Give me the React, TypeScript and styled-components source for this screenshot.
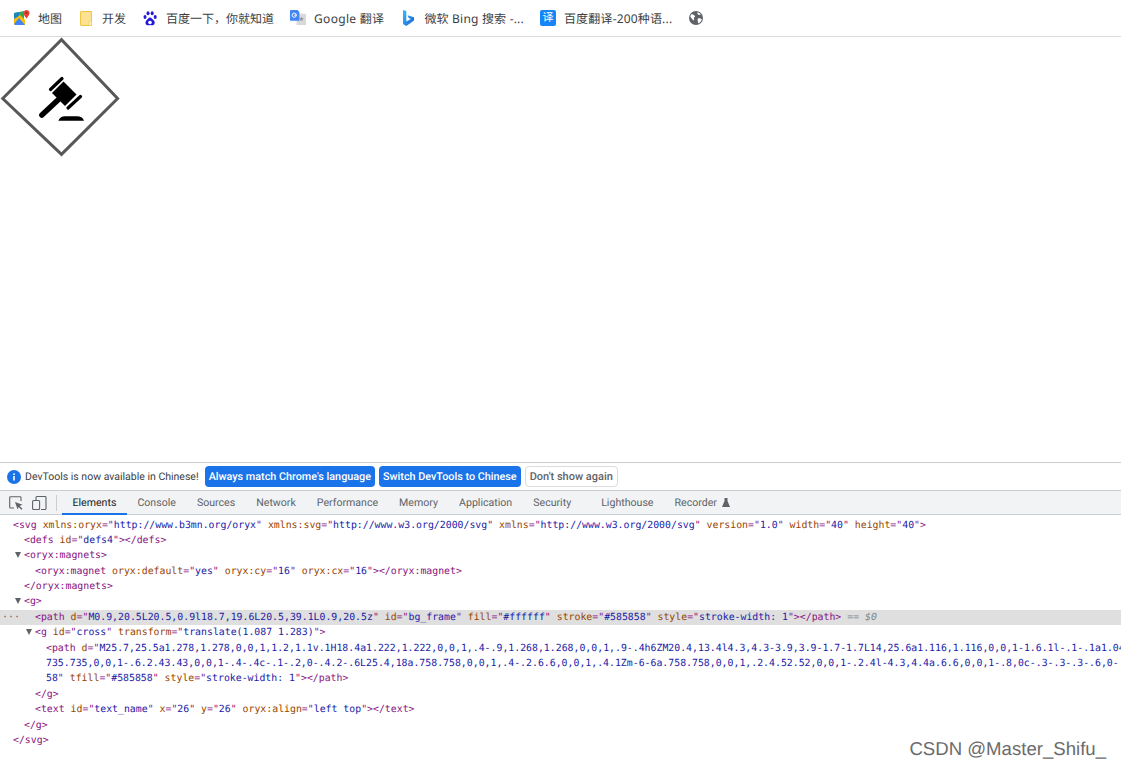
import React from "react";
import styled, { createGlobalStyle } from "styled-components";

const GlobalStyle = createGlobalStyle`
  html, body {
    margin: 0;
    padding: 0;
    background: #ffffff;
    overflow: hidden;
    text-rendering: geometricPrecision;
  }
`;

const BAR_FONT = `"Noto Sans", "Noto Sans CJK SC", "Liberation Sans", sans-serif`;
const DEVTOOLS_FONT = `Roboto, "Liberation Sans", sans-serif`;

function MapsIcon() {
  return (
    <svg width="16" height="16" viewBox="0 0 16 16">
      <path d="M0 3L10 1V15H1.5L0 14Z" fill="#34a853" />
      <path d="M0 9L6 5L11 10V15H1.5L0 14Z" fill="#fbbc04" />
      <path d="M0 14L5 8L11 15H1.5Z" fill="#4285f4" />
      <path d="M0 3L5 2V6L0 9Z" fill="#1a73e8" opacity="0.7" />
      <path d="M12.5 0C10.6 0 9.5 1.4 9.5 3C9.5 5.2 12.5 8.5 12.5 8.5S15.5 5.2 15.5 3C15.5 1.4 14.4 0 12.5 0Z" fill="#ea4335" />
      <circle cx="12.5" cy="3" r="1.1" fill="#9c2b22" />
    </svg>
  );
}

function FolderIcon() {
  return (
    <svg width="12" height="15" viewBox="0 0 12 15">
      <path d="M1 .5H11.5V14.5H1A.6.6 0 0 1 .5 14V1A.6.6 0 0 1 1 .5Z" fill="#fde293" stroke="#f0c53f" />
      <rect x="9" y="10" width="2.5" height="4.5" fill="#fff3c4" stroke="#f0c53f" strokeWidth="0.6" />
    </svg>
  );
}

function BaiduIcon() {
  return (
    <svg width="14" height="15" viewBox="0 0 14 15" fill="#2319dc">
      <ellipse cx="2" cy="6" rx="1.5" ry="2" />
      <ellipse cx="5" cy="2.3" rx="1.5" ry="2" />
      <ellipse cx="9.2" cy="2.3" rx="1.5" ry="2" />
      <ellipse cx="12.2" cy="6" rx="1.5" ry="2" />
      <path d="M7 6.5C5.5 6.5 5 8 3.6 9.2C2 10.5 2 13.8 4.6 14.3C5.8 14.5 6.2 14 7 14C7.8 14 8.4 14.5 9.6 14.3C12.2 13.8 12.2 10.5 10.6 9.2C9.2 8 8.5 6.5 7 6.5Z" />
      <circle cx="7" cy="11.5" r="1.8" fill="#ffffff" />
    </svg>
  );
}

function GoogleTranslateIcon() {
  return (
    <svg width="16" height="16" viewBox="0 0 17 17">
      <rect x="7" y="4" width="10" height="12" fill="#d9d9d9" />
      <path d="M12.1 7L12.8 8.8H14.7L13.2 10L13.7 11.9L12.1 10.7L10.6 11.9L11.1 10L9.6 8.8H11.5Z" fill="#8a93a6" />
      <path d="M1 0H8L10 2V11.5H1A1 1 0 0 1 0 10.5V1A1 1 0 0 1 1 0Z" fill="#4285f4" />
      <circle cx="4.5" cy="5.5" r="2.2" fill="none" stroke="#ffffff" strokeWidth="1" />
      <path d="M4.5 5.5H7" stroke="#ffffff" strokeWidth="1" />
    </svg>
  );
}

function BingIcon() {
  return (
    <svg width="11" height="16" viewBox="0 0 11 16">
      <defs>
        <linearGradient id="bingGrad" x1="0" y1="0" x2="1" y2="1">
          <stop offset="0" stopColor="#37bdff" />
          <stop offset="1" stopColor="#1a5fd6" />
        </linearGradient>
      </defs>
      <path d="M0 0L3.3 1.1V11.5L7.8 9L5.7 8L4.5 5.2L11 7.3V10.6L3.3 16L0 14Z" fill="url(#bingGrad)" />
    </svg>
  );
}

function GlobeIcon() {
  return (
    <svg width="14" height="14" viewBox="0 0 14 14">
      <circle cx="7" cy="7" r="7" fill="#5f6368" />
      <path d="M2 3.5C3.5 3 4.5 4 5.5 4.5C6.5 5 6 6.5 5 6.5C4.5 7.5 5.5 8.5 5 9.5C4 9.5 2 7 1.3 5.5Z" fill="#ffffff" />
      <path d="M8.5 1.2C9.5 1.5 11 2.3 11.8 3.5C11 4.2 9.8 4 9 3.5C8.5 3 8.3 2 8.5 1.2ZM9 7.5C10.5 7 12 7.8 12.8 8.5C12.3 10 11 11.8 9.5 12.5C9 11 8 9 9 7.5Z" fill="#ffffff" />
    </svg>
  );
}

function InfoIcon() {
  return (
    <svg width="14" height="14" viewBox="0 0 14 14">
      <circle cx="7" cy="7" r="7" fill="#1a73e8" />
      <rect x="6.2" y="6" width="1.6" height="4.5" fill="#ffffff" />
      <rect x="6.2" y="3.4" width="1.6" height="1.6" fill="#ffffff" />
    </svg>
  );
}

function InspectIcon() {
  return (
    <svg width="14" height="14" viewBox="0 0 14 14" fill="none">
      <path d="M5 12H1.5A.8.8 0 0 1 .7 11.2V1.5A.8.8 0 0 1 1.5 .7H11.2A.8.8 0 0 1 12 1.5V5" stroke="#5f6368" strokeWidth="1.1" />
      <path d="M6 6L13.5 8.8L10.6 10L13.5 12.8L12.5 13.8L9.6 11L8.6 13.5Z" fill="#5f6368" />
    </svg>
  );
}

function DeviceIcon() {
  return (
    <svg width="15" height="14" viewBox="0 0 15 14" fill="none" stroke="#5f6368" strokeWidth="1.1">
      <path d="M4 4V1.5A1 1 0 0 1 5 .5H13A1 1 0 0 1 14 1.5V12.5A1 1 0 0 1 13 13.5H9" />
      <rect x=".6" y="4.5" width="7" height="9" rx="1" />
    </svg>
  );
}

function FlaskIcon() {
  return (
    <svg width="8" height="9" viewBox="0 0 8 9">
      <path d="M2.5 0H5.5V3L8 9H0L2.5 3Z" fill="#5f6368" />
    </svg>
  );
}

function GavelStamp() {
  return (
    <svg width="120" height="120" viewBox="0 0 120 120">
      <path d="M2.7 61.5L61.5 2.7L117.6 61.5L61.5 117.3L2.7 61.5Z" fill="#ffffff" stroke="#585858" strokeWidth="3" />
      <path d="M63.5 44.5L76.5 57.5L65 69L52 56Z" fill="#000000" />
      <path d="M50.5 52.5L62 41.5M68 71L80.5 59.5" stroke="#000000" strokeWidth="3.2" strokeLinecap="round" />
      <path d="M58.5 62.5L41.9 78" stroke="#000000" strokeWidth="5.5" strokeLinecap="round" />
      <path d="M58.3 83.7C59.5 80.5 62 79.2 65 79.2H77C80.5 79.2 83 80.5 84 83.7Z" fill="#000000" />
    </svg>
  );
}

const tabs = [
  { label: "Elements", active: true },
  { label: "Console" },
  { label: "Sources" },
  { label: "Network" },
  { label: "Performance" },
  { label: "Memory" },
  { label: "Application" },
  { label: "Security" },
  { label: "Lighthouse", extra: 9 },
  { label: "Recorder", flask: true },
];

function Open({ name }: { name: string }) {
  return <Tag>&lt;{name}</Tag>;
}

function Pair({ name, value }: { name: string; value: string }) {
  return (
    <>
      {" "}
      <AttrName>{name}</AttrName>
      <Tag>=&quot;</Tag>
      <AttrValue>{value}</AttrValue>
      <Tag>&quot;</Tag>
    </>
  );
}

function App() {
  const bookmarks = [
    { icon: <MapsIcon />, label: "地图" },
    { icon: <FolderIcon />, label: "开发" },
    { icon: <BaiduIcon />, label: "百度一下，你就知道" },
    { icon: <GoogleTranslateIcon />, label: "Google 翻译", spread: 0.3 },
    { icon: <BingIcon />, label: "微软 Bing 搜索 -...", spread: 0.2 },
    { icon: <TranslateBadge>译</TranslateBadge>, label: "百度翻译-200种语...", spread: 0.17 },
  ];

  return (
    <>
      <GlobalStyle />
      <Window>
        <BookmarkBar>
          {bookmarks.map((b) => (
            <Bookmark key={b.label} $spread={b.spread}>
              <IconBox>{b.icon}</IconBox>
              <span>{b.label}</span>
            </Bookmark>
          ))}
          <IconBox>
            <GlobeIcon />
          </IconBox>
        </BookmarkBar>

        <Viewport>
          <GavelStamp />
        </Viewport>

        <Devtools>
          <InfoBar>
            <InfoIcon />
            <InfoText>DevTools is now available in Chinese!</InfoText>
            <PrimaryButton>Always match Chrome's language</PrimaryButton>
            <PrimaryButton>Switch DevTools to Chinese</PrimaryButton>
            <GhostButton>Don't show again</GhostButton>
          </InfoBar>

          <TabBar>
            <ToolIcons>
              <InspectIcon />
              <DeviceIcon />
            </ToolIcons>
            <TabDivider />
            {tabs.map((t) => (
              <TabItem key={t.label} $active={t.active} $extra={t.extra}>
                {t.label}
                {t.flask && <FlaskIcon />}
              </TabItem>
            ))}
          </TabBar>

          <Tree>
            <Row $level={0}>
              <Open name="svg" />
              <Pair name="xmlns:oryx" value="http://www.b3mn.org/oryx" />
              <Pair name="xmlns:svg" value="http://www.w3.org/2000/svg" />
              <Pair name="xmlns" value="http://www.w3.org/2000/svg" />
              <Pair name="version" value="1.0" />
              <Pair name="width" value="40" />
              <Pair name="height" value="40" />
              <Tag>&gt;</Tag>
            </Row>
            <Row $level={1}>
              <Open name="defs" />
              <Pair name="id" value="defs4" />
              <Tag>&gt;&lt;/defs&gt;</Tag>
            </Row>
            <Row $level={1} $arrow>
              <Tag>&lt;oryx:magnets&gt;</Tag>
            </Row>
            <Row $level={2}>
              <Open name="oryx:magnet" />
              <Pair name="oryx:default" value="yes" />
              <Pair name="oryx:cy" value="16" />
              <Pair name="oryx:cx" value="16" />
              <Tag>&gt;&lt;/oryx:magnet&gt;</Tag>
            </Row>
            <Row $level={1}>
              <Tag>&lt;/oryx:magnets&gt;</Tag>
            </Row>
            <Row $level={1} $arrow>
              <Tag>&lt;g&gt;</Tag>
            </Row>
            <Row $level={2} $selected>
              <Dots>···</Dots>
              <Open name="path" />
              <Pair name="d" value="M0.9,20.5L20.5,0.9l18.7,19.6L20.5,39.1L0.9,20.5z" />
              <Pair name="id" value="bg_frame" />
              <Pair name="fill" value="#ffffff" />
              <Pair name="stroke" value="#585858" />
              <Pair name="style" value="stroke-width: 1" />
              <Tag>&gt;&lt;/path&gt;</Tag>
              <DollarNote> == $0</DollarNote>
            </Row>
            <Row $level={2} $arrow>
              <Open name="g" />
              <Pair name="id" value="cross" />
              <Pair name="transform" value="translate(1.087 1.283)" />
              <Tag>&gt;</Tag>
            </Row>
            <Row $level={3}>
              <Open name="path" />{" "}
              <AttrName>d</AttrName>
              <Tag>=&quot;</Tag>
              <AttrValue>
                M25.7,25.5a1.278,1.278,0,0,1,1.2,1.1v.1H18.4a1.222,1.222,0,0,1,.4-.9,1.268,1.268,0,0,1,.9-.4h6ZM20.4,13.4l4.3,4.3-3.9,3.9-1.7-1.7L14,25.6a1.116,1.116,0,0,1-1.6.1l-.1-.1a1.04
              </AttrValue>
            </Row>
            <Row $level={3}>
              <AttrValue>
                735.735,0,0,1-.6.2.43.43,0,0,1-.4-.4c-.1-.2,0-.4.2-.6L25.4,18a.758.758,0,0,1,.4-.2.6.6,0,0,1,.4.1Zm-6-6a.758.758,0,0,1,.2.4.52.52,0,0,1-.2.4l-4.3,4.4a.6.6,0,0,1-.8,0c-.3-.3-.3-.6,0-
              </AttrValue>
            </Row>
            <Row $level={3}>
              <AttrValue>58</AttrValue>
              <Tag>&quot;</Tag>
              <Pair name="tfill" value="#585858" />
              <Pair name="style" value="stroke-width: 1" />
              <Tag>&gt;&lt;/path&gt;</Tag>
            </Row>
            <Row $level={2}>
              <Tag>&lt;/g&gt;</Tag>
            </Row>
            <Row $level={2}>
              <Open name="text" />
              <Pair name="id" value="text_name" />
              <Pair name="x" value="26" />
              <Pair name="y" value="26" />
              <Pair name="oryx:align" value="left top" />
              <Tag>&gt;&lt;/text&gt;</Tag>
            </Row>
            <Row $level={1}>
              <Tag>&lt;/g&gt;</Tag>
            </Row>
            <Row $level={0}>
              <Tag>&lt;/svg&gt;</Tag>
            </Row>
          </Tree>
        </Devtools>

        <Watermark>CSDN @Master_Shifu_</Watermark>
      </Window>
    </>
  );
}

const Window = styled.div`
  position: relative;
  display: flex;
  flex-direction: column;
  width: 1121px;
  height: 768px;
  overflow: hidden;
  font-family: ${BAR_FONT};
`;

const BookmarkBar = styled.div`
  display: flex;
  align-items: center;
  gap: 16px;
  box-sizing: border-box;
  height: 37px;
  padding-left: 14px;
  border-bottom: 1px solid #dadce0;
  flex-shrink: 0;
`;

const Bookmark = styled.div<{ $spread?: number }>`
  display: flex;
  align-items: center;
  gap: 8px;
  font-size: 12px;
  letter-spacing: ${(p) => p.$spread ?? 0}px;
  color: #3c4043;
  white-space: nowrap;
`;

const IconBox = styled.div`
  display: flex;
  align-items: center;
  justify-content: center;
  width: 16px;
  height: 16px;
  letter-spacing: 0;
`;

const TranslateBadge = styled.div`
  display: flex;
  align-items: center;
  justify-content: center;
  width: 16px;
  height: 16px;
  border-radius: 2px;
  background: #1685f8;
  color: #ffffff;
  font-size: 11px;
  line-height: 16px;
`;

const Viewport = styled.div`
  flex: 1;
  line-height: 0;
`;

const Devtools = styled.div`
  display: flex;
  flex-direction: column;
  height: 306px;
  flex-shrink: 0;
  font-family: ${DEVTOOLS_FONT};
`;

const InfoBar = styled.div`
  display: flex;
  align-items: center;
  gap: 4px;
  box-sizing: border-box;
  height: 29px;
  padding-left: 7px;
  border-top: 1px solid #cacdd1;
  border-bottom: 1px solid #cacdd1;
`;

const InfoText = styled.span`
  margin-right: 2px;
  font-size: 10.5px;
  color: #3c4043;
  white-space: nowrap;
`;

const PrimaryButton = styled.div`
  display: flex;
  align-items: center;
  height: 21px;
  padding: 0 4px;
  border-radius: 4px;
  background: #1a73e8;
  color: #ffffff;
  font-size: 10.8px;
  font-weight: 500;
  white-space: nowrap;
`;

const GhostButton = styled.div`
  display: flex;
  align-items: center;
  box-sizing: border-box;
  height: 21px;
  padding: 0 4px;
  border: 1px solid #dadce0;
  border-radius: 4px;
  color: #5f6368;
  font-size: 11px;
  font-weight: 500;
  white-space: nowrap;
`;

const TabBar = styled.div`
  display: flex;
  align-items: stretch;
  box-sizing: border-box;
  height: 24px;
  padding-left: 9px;
  background: #f1f3f4;
  border-bottom: 1px solid #cacdd1;
  flex-shrink: 0;
`;

const ToolIcons = styled.div`
  display: flex;
  align-items: center;
  gap: 9px;
`;

const TabDivider = styled.div`
  width: 1px;
  height: 16px;
  margin: 4px 5px 0 9px;
  background: #cacdd1;
`;

const TabItem = styled.div<{ $active?: boolean; $extra?: number }>`
  display: flex;
  align-items: center;
  gap: 5px;
  box-sizing: border-box;
  height: 24px;
  margin-left: ${(p) => p.$extra ?? 0}px;
  padding: 0 10.5px;
  font-size: 10.6px;
  color: ${(p) => (p.$active ? "#202124" : "#5f6368")};
  white-space: nowrap;
  border-bottom: 2px solid ${(p) => (p.$active ? "#1a73e8" : "transparent")};
`;

const Tree = styled.div`
  padding-top: 2.5px;
  font-family: "DejaVu Sans Mono", "Liberation Mono", monospace;
  font-size: 9.86px;
`;

const Row = styled.div<{ $level: number; $arrow?: boolean; $selected?: boolean }>`
  position: relative;
  box-sizing: border-box;
  height: 15.4px;
  line-height: 15.4px;
  padding-left: ${(p) => 13 + p.$level * 11}px;
  white-space: pre;
  background: ${(p) => (p.$selected ? "#dfdfdf" : "transparent")};

  &::before {
    content: ${(p) => (p.$arrow ? '""' : "none")};
    position: absolute;
    top: 4px;
    left: ${(p) => 4 + p.$level * 11}px;
    border-left: 3.5px solid transparent;
    border-right: 3.5px solid transparent;
    border-top: 6px solid #5f6368;
  }
`;

const Dots = styled.span`
  position: absolute;
  left: 2px;
  top: 0;
  color: #5f6368;
  font-size: 10px;
`;

const Tag = styled.span`
  color: #881280;
`;

const AttrName = styled.span`
  color: #994500;
`;

const AttrValue = styled.span`
  color: #1a1aa6;
`;

const DollarNote = styled.span`
  color: #80868b;
  font-style: italic;
`;

const Watermark = styled.div`
  position: absolute;
  right: 15px;
  bottom: 8px;
  font-family: "Liberation Sans", sans-serif;
  font-size: 18.6px;
  color: #6b6b6b;
  text-shadow: 0 0 1px #ffffff;
  white-space: nowrap;
`;

export default App;
